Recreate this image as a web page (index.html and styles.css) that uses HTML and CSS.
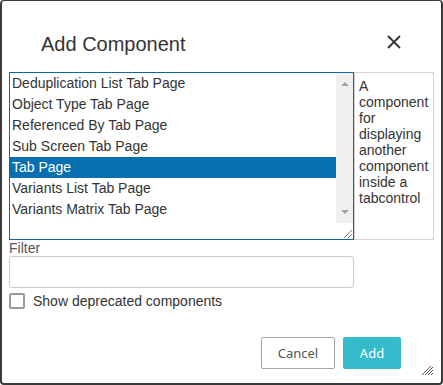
FILE: index.html
```html
<!DOCTYPE html>
<html lang="en">
<head>
    <meta charset="UTF-8">
    <title>Add Component</title>
    <link rel="stylesheet" href="styles.css">
</head>
<body>
    <div class="dialog">
        <div class="header">
            <h2 class="title">Add Component</h2>
            <button class="close-btn" aria-label="Close">
                <svg width="14" height="14" viewBox="0 0 14 14">
                    <path d="M1 1 L13 13 M13 1 L1 13" stroke="#333" stroke-width="1.8" fill="none"/>
                </svg>
            </button>
        </div>
        <div class="main-row">
            <div class="listbox">
                <ul class="items">
                    <li>Deduplication List Tab Page</li>
                    <li>Object Type Tab Page</li>
                    <li>Referenced By Tab Page</li>
                    <li>Sub Screen Tab Page</li>
                    <li class="selected">Tab Page</li>
                    <li>Variants List Tab Page</li>
                    <li>Variants Matrix Tab Page</li>
                </ul>
                <!-- 비활성 스크롤바 -->
                <div class="scrollbar">
                    <div class="track">
                        <span class="arrow up"></span>
                        <span class="arrow down"></span>
                    </div>
                    <div class="corner">
                        <svg width="17" height="16" viewBox="0 0 17 16">
                            <path d="M8 15 L16 7 M12 15 L16 11" stroke="#777" stroke-width="1" fill="none"/>
                        </svg>
                    </div>
                </div>
            </div>
            <div class="description">A component for displaying another component inside a tabcontrol</div>
        </div>
        <label class="filter-label" for="filter">Filter</label>
        <input class="filter-input" type="text" id="filter">
        <label class="check-row">
            <span class="checkbox"></span>
            <span>Show deprecated components</span>
        </label>
        <div class="footer">
            <button class="btn btn-cancel">Cancel</button>
            <button class="btn btn-add">Add</button>
        </div>
        <svg class="resize-grip" width="12" height="9" viewBox="0 0 12 9">
            <path d="M1 9 L10 0 M4 9 L12 1 M7 9 L12 4 M10 9 L12 7" stroke="#555" stroke-width="1" fill="none"/>
        </svg>
    </div>
</body>
</html>
```

FILE: styles.css
```css
body {
    margin: 0;
    background-color: #fff;
    font-family: "Liberation Sans", Arial, sans-serif;
    font-size: 14px;
    color: #333;
}
.dialog {
    position: relative;
    width: 443px;
    height: 385px;
    box-sizing: border-box;
    border: 2px solid #3a3a3a;
    border-top-width: 1px;
    border-radius: 4px;
    padding: 0 7px 14px 7px;
    display: flex;
    flex-direction: column;
    background-color: #fff;
}
.header {
    display: flex;
    align-items: flex-start;
    height: 71px;
    box-sizing: border-box;
    padding: 32px 33px 0 32px;
}
.title {
    margin: 0;
    font-size: 20px;
    font-weight: normal;
    line-height: 23px;
    color: #333;
}
.close-btn {
    margin-left: auto;
    margin-top: 2px;
    width: 14px;
    height: 14px;
    padding: 0;
    border: none;
    background: none;
    display: flex;
}
.main-row {
    display: flex;
    height: 168px;
}
.listbox {
    width: 345px;
    box-sizing: border-box;
    border: 1px solid #0b6aa2;
    display: flex;
}
.items {
    flex: 1;
    list-style: none;
    margin: 0;
    padding: 0;
}
.items li {
    height: 21px;
    line-height: 21px;
    padding-left: 2px;
    white-space: nowrap;
}
.items li.selected {
    background-color: #0870b0;
    color: #fff;
}
.scrollbar {
    width: 17px;
    display: flex;
    flex-direction: column;
}
.track {
    flex: 1;
    background-color: #f0f0f0;
    display: flex;
    flex-direction: column;
    justify-content: space-between;
    align-items: center;
    padding: 9px 0 9px 0;
}
.arrow {
    width: 0;
    height: 0;
    border-left: 4px solid transparent;
    border-right: 4px solid transparent;
}
.arrow.up {
    border-bottom: 4px solid #a3a3a3;
}
.arrow.down {
    border-top: 4px solid #a3a3a3;
}
.corner {
    height: 16px;
    background-color: #fff;
    display: flex;
}
.description {
    width: 80px;
    box-sizing: border-box;
    border: 1px solid #d2d2d2;
    padding: 5px 2px 0 4px;
    line-height: 16px;
    color: #333;
}
.filter-label {
    display: block;
    line-height: 16px;
    color: #555;
}
.filter-input {
    width: 345px;
    height: 32px;
    box-sizing: border-box;
    border: 1px solid #ccc;
    border-radius: 3px;
    margin: 0;
    padding: 4px 8px;
    font: inherit;
}
.check-row {
    display: flex;
    align-items: center;
    gap: 8px;
    margin-top: 5px;
    line-height: 16px;
}
.checkbox {
    width: 16px;
    height: 16px;
    box-sizing: border-box;
    border: 2px solid #9a9a9a;
    border-radius: 2px;
}
.footer {
    margin-top: auto;
    display: flex;
    justify-content: flex-end;
    gap: 8px;
    padding-right: 33px;
}
.btn {
    height: 32px;
    box-sizing: border-box;
    border-radius: 2px;
    font-family: "Noto Sans", "Open Sans", sans-serif;
    font-size: 13px;
    cursor: pointer;
}
.btn-cancel {
    width: 74px;
    border: 1px solid #a5a5a5;
    background-color: #fff;
    color: #555;
}
.btn-add {
    width: 58px;
    border: none;
    background-color: #34bbcc;
    color: #fff;
}
.resize-grip {
    position: absolute;
    right: 8px;
    bottom: 8px;
}
```
